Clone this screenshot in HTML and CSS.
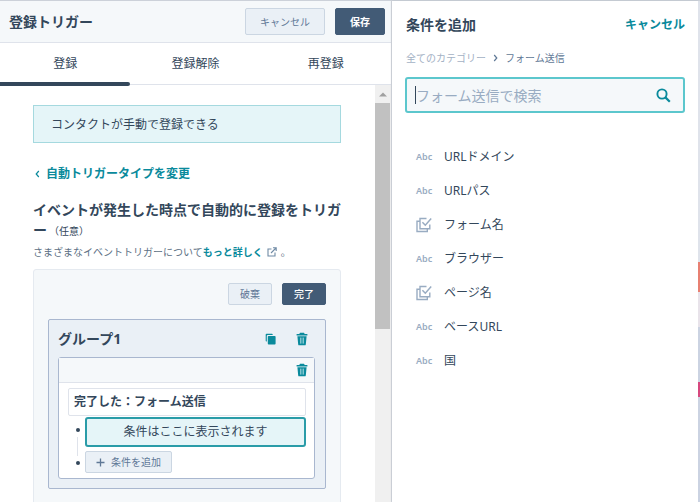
FILE: index.html
```html
<!DOCTYPE html>
<html lang="ja">
<head>
    <meta charset="UTF-8">
    <meta name="viewport" content="width=device-width, initial-scale=1.0">
    <title>登録トリガー</title>
    <link rel="stylesheet" href="styles.css">
</head>
<body>

<!-- Shared icons -->
<svg class="sprite" aria-hidden="true">
    <symbol id="icon-trash" viewBox="0 0 12 14">
        <path d="M4 0.8h4l0.7 1.2H11.4v1.6H0.6V2h2.7z" fill="currentColor"/>
        <path d="M1.4 4.2h9.2l-0.8 8.2a1 1 0 0 1-1 0.9H3.2a1 1 0 0 1-1-0.9z" fill="currentColor"/>
        <path d="M4.5 5.6v6M6 5.6v6M7.5 5.6v6" stroke="#d5eef2" stroke-width="0.6"/>
    </symbol>
    <symbol id="icon-multi" viewBox="0 0 16 16">
        <path d="M4 4.2H1v10.3h10.3v-2.4M10.5 1.5H4v10.2h9.8V7.6" fill="none" stroke="currentColor" stroke-width="1.4"/>
        <path d="M6.4 5.2l2.9 3L15.2 1.6" fill="none" stroke="currentColor" stroke-width="1.5"/>
    </symbol>
</svg>

<div class="app">
    <main class="editor">
        <header class="editor-header">
            <h1>登録トリガー</h1>
            <button class="btn btn-secondary btn-cancel">キャンセル</button>
            <button class="btn btn-primary btn-save">保存</button>
        </header>

        <nav class="tabs">
            <a href="#" class="tab active">登録</a>
            <a href="#" class="tab">登録解除</a>
            <a href="#" class="tab">再登録</a>
        </nav>

        <div class="scroll-area">
            <div class="content">
                <div class="notice">コンタクトが手動で登録できる</div>

                <a href="#" class="back-link">
                    <svg width="5" height="8" viewBox="0 0 5 8"><path d="M3.8 1L1.2 4l2.6 3" fill="none" stroke="currentColor" stroke-width="1.2"/></svg>
                    自動トリガータイプを変更
                </a>

                <h2>イベントが発生した時点で自動的に登録をトリガー<span class="optional">（任意）</span></h2>
                <p class="help">さまざまなイベントトリガーについて<a href="#">もっと詳しく<svg width="10" height="10" viewBox="0 0 10 10"><path d="M4.5 2H1v7h7V5.5M6 0.8h3.2V4M9 1L4 6" fill="none" stroke="currentColor" stroke-width="1.1"/></svg></a>。</p>

                <section class="panel">
                    <div class="panel-actions">
                        <button class="btn btn-secondary btn-small">破棄</button>
                        <button class="btn btn-primary btn-small">完了</button>
                    </div>

                    <div class="group">
                        <div class="group-header">
                            <h3>グループ1</h3>
                            <button class="icon-btn" aria-label="複製">
                                <svg width="12" height="12" viewBox="0 0 12 12"><path d="M1.8 8.6H1.5a0.8 0.8 0 0 1-0.8-0.8V1.6a0.8 0.8 0 0 1 0.8-0.8h5.4a0.8 0.8 0 0 1 0.8 0.8v0.3H3.1a1.2 1.2 0 0 0-1.3 1.3z" fill="currentColor"/><rect x="2.8" y="2.9" width="7.8" height="8.5" rx="0.9" fill="currentColor"/></svg>
                            </button>
                            <button class="icon-btn" aria-label="グループを削除">
                                <svg width="12" height="14"><use href="#icon-trash"/></svg>
                            </button>
                        </div>

                        <div class="filter">
                            <div class="filter-header">
                                <button class="icon-btn" aria-label="条件を削除">
                                    <svg width="12" height="14"><use href="#icon-trash"/></svg>
                                </button>
                            </div>
                            <div class="filter-body">
                                <div class="filter-title">完了した：フォーム送信</div>
                                <div class="branch">
                                    <div class="rail"><i class="dot"></i><i class="line"></i><i class="dot"></i></div>
                                    <div class="branch-items">
                                        <div class="placeholder">条件はここに表示されます</div>
                                        <button class="btn btn-secondary btn-small btn-plus">
                                            <svg width="9" height="9" viewBox="0 0 9 9"><path d="M4.5 0.5v8M0.5 4.5h8" stroke="currentColor" stroke-width="1.3"/></svg>
                                            条件を追加
                                        </button>
                                    </div>
                                </div>
                            </div>
                        </div>
                    </div>
                </section>
            </div>

            <div class="scrollbar">
                <svg width="8" height="5" viewBox="0 0 8 5"><path d="M0 4.5L4 0.5l4 4z" fill="#a0a0a0"/></svg>
                <div class="thumb"></div>
            </div>
        </div>
    </main>

    <aside class="picker">
        <div class="picker-header">
            <h2>条件を追加</h2>
            <a href="#">キャンセル</a>
        </div>
        <div class="breadcrumb">
            <a href="#">全てのカテゴリー</a>
            <svg width="5" height="8" viewBox="0 0 5 8"><path d="M1.2 1l2.6 3-2.6 3" fill="none" stroke="currentColor" stroke-width="1.2"/></svg>
            <span>フォーム送信</span>
        </div>
        <label class="search">
            <span class="caret"></span>
            <input type="text" placeholder="フォーム送信で検索" aria-label="フォーム送信で検索">
            <svg width="15" height="15" viewBox="0 0 15 15"><circle cx="6" cy="6" r="4.6" fill="none" stroke="currentColor" stroke-width="1.9"/><path d="M9.4 9.4l4.4 4.4" stroke="currentColor" stroke-width="2.2"/></svg>
        </label>
        <ul class="properties">
            <li><span class="type">Abc</span>URLドメイン</li>
            <li><span class="type">Abc</span>URLパス</li>
            <li><span class="type"><svg width="16" height="16"><use href="#icon-multi"/></svg></span>フォーム名</li>
            <li><span class="type">Abc</span>ブラウザー</li>
            <li><span class="type"><svg width="16" height="16"><use href="#icon-multi"/></svg></span>ページ名</li>
            <li><span class="type">Abc</span>ベースURL</li>
            <li><span class="type">Abc</span>国</li>
        </ul>
    </aside>

    <div class="backdrop"></div>
</div>

</body>
</html>
```
FILE: styles.css
```css
:root {
    --text: #33475b;
    --muted: #99acc2;
    --teal: #0a8a9c;
    --primary: #425b76;
    --secondary: #eaf0f6;
    --secondary-text: #5f7896;
    --border: #cbd6e2;
    --group-border: #a9b7cf;
    --panel-bg: #f5f8fa;
    --mint: #e5f5f8;
}

* {
    box-sizing: border-box;
    margin: 0;
    padding: 0;
}

body {
    font-family: "Noto Sans", "Noto Sans CJK JP", sans-serif;
    font-size: 12px;
    line-height: 18px;
    color: var(--text);
    background: #fff;
    overflow: hidden;
}

a {
    color: var(--teal);
    text-decoration: none;
}

svg {
    flex-shrink: 0;
}

.sprite {
    display: none;
}

.app {
    display: flex;
    height: 100vh;
    border-top: 1px solid #ccd1d9;
}

/* Editor */
.editor {
    width: 56%;
    display: flex;
    flex-direction: column;
    border-right: 1px solid #d5d8de;
}

.editor-header {
    display: flex;
    align-items: center;
    gap: 10px;
    height: 42px;
    padding: 0 6px 0 9px;
    background: var(--panel-bg);
    border-bottom: 1px solid #dfe3eb;
}

h1 {
    flex: 1;
    font-size: 14px;
}

/* Buttons */
.btn {
    display: flex;
    align-items: center;
    justify-content: center;
    gap: 6px;
    height: 27px;
    border: 1px solid var(--border);
    border-radius: 2px;
    font-family: inherit;
    font-size: 10px;
    line-height: 18px;
    cursor: pointer;
}

.btn-primary {
    background: var(--primary);
    border-color: var(--primary);
    color: #fff;
    font-weight: 500;
}

.btn-secondary {
    background: var(--secondary);
    color: var(--secondary-text);
}

.btn-cancel { padding: 0 14px; }
.btn-save { padding: 0 14px; font-weight: 700; }
.btn-small { height: 22px; padding: 0 11px; }
.btn-plus { padding: 0 10px; }

.icon-btn {
    display: flex;
    border: none;
    background: none;
    color: var(--teal);
    cursor: pointer;
}

/* Tabs */
.tabs {
    display: flex;
    height: 42px;
    border-bottom: 1px solid #dfe3eb;
}

.tab {
    position: relative;
    flex: 1;
    text-align: center;
    line-height: 42px;
    color: var(--text);
}

.tab.active::after {
    content: "";
    position: absolute;
    left: 0;
    right: 0;
    bottom: -2px;
    height: 4px;
    background: var(--text);
    border-radius: 0 2px 2px 0;
}

/* Scrolling content */
.scroll-area {
    flex: 1;
    display: flex;
    min-height: 0;
    overflow: hidden;
}

.content {
    flex: 1;
    padding: 20px 34px 0 33px;
}

.notice {
    padding: 10px 17px 8px;
    background: var(--mint);
    border: 1px solid #a5d9df;
}

.back-link {
    display: flex;
    align-items: center;
    gap: 6px;
    margin: 22px 0 17px;
    padding-left: 2px;
    font-weight: 700;
}

.content h2 {
    font-size: 14px;
    line-height: 20px;
    line-break: loose;
}

.optional {
    display: inline-block;
    margin-left: 2px;
    font-size: 10px;
    font-weight: 400;
    line-height: 18px;
}

.help {
    margin-top: 3px;
    font-size: 10px;
    color: #5c6f84;
}

.help a {
    font-weight: 700;
}

.help svg {
    margin: 0 4px;
    vertical-align: -1px;
    color: #6f8aa5;
}

.panel {
    margin-top: 8px;
    padding: 13px 14px 40px;
    background: var(--panel-bg);
    border: 1px solid #e5eaf0;
    border-radius: 3px;
}

.panel-actions {
    display: flex;
    justify-content: flex-end;
    gap: 10px;
    margin-bottom: 14px;
}

/* Filter group */
.group {
    padding: 0 10px 9px 9px;
    background: var(--secondary);
    border: 1px solid var(--group-border);
    border-radius: 2px;
}

.group-header {
    display: flex;
    align-items: center;
    gap: 19px;
    height: 37px;
    padding-right: 7px;
}

.group-header h3 {
    flex: 1;
    font-size: 14px;
}

.filter {
    background: #fff;
    border: 1px solid var(--group-border);
    border-radius: 3px;
}

.filter-header {
    display: flex;
    align-items: center;
    justify-content: flex-end;
    height: 25px;
    padding-right: 6px;
    background: var(--panel-bg);
    border-bottom: 1px solid #dfe3eb;
}

.filter-body {
    padding: 5px 8px 5px 9px;
}

.filter-title {
    padding: 4px 5px;
    border: 1px solid #dfe3eb;
    border-radius: 2px;
    font-weight: 700;
}

.branch {
    display: flex;
    gap: 5px;
    margin-top: 1px;
}

.rail {
    width: 12px;
    display: flex;
    flex-direction: column;
    align-items: flex-end;
    gap: 5px;
    padding: 11px 0 8px;
}

.dot {
    width: 4px;
    height: 4px;
    border-radius: 50%;
    background: var(--text);
}

.line {
    flex: 1;
    width: 1px;
    margin-right: 2px;
    background: #dfe3eb;
}

.branch-items {
    flex: 1;
    display: flex;
    flex-direction: column;
    align-items: flex-start;
    gap: 4px;
}

.placeholder {
    width: 100%;
    padding: 4px;
    text-align: center;
    background: var(--mint);
    border: 2px solid #2a9ca8;
    border-radius: 3px;
}

/* Scrollbar */
.scrollbar {
    width: 16px;
    display: flex;
    flex-direction: column;
    align-items: center;
    gap: 6px;
    padding: 7px 1px 0 0;
    background: #f0f0f0;
}

.thumb {
    width: 15px;
    height: 55%;
    background: #c1c1c1;
}

/* Property picker */
.picker {
    flex: 1;
    padding: 0 13px 0 14px;
    box-shadow: 0 0 2px #b4bac4;
}

.picker-header {
    display: flex;
    align-items: center;
    justify-content: space-between;
    height: 48px;
}

.picker-header h2 {
    font-size: 14px;
}

.picker-header a {
    font-weight: 700;
}

.breadcrumb {
    display: flex;
    align-items: center;
    gap: 7px;
    font-size: 10px;
    color: #5f7896;
}

.breadcrumb a {
    color: #a3b1c4;
}

.search {
    display: flex;
    align-items: center;
    height: 36px;
    margin: 10px 0 27px -1px;
    padding: 0 12px 0 8px;
    background: var(--panel-bg);
    border: 2px solid #5cc7cd;
    border-radius: 3px;
    color: var(--teal);
}

.caret {
    width: 1px;
    height: 18px;
    background: var(--text);
}

.search input {
    flex: 1;
    min-width: 0;
    border: none;
    outline: none;
    background: none;
    font-family: inherit;
    font-size: 14px;
    color: var(--text);
}

.search input::placeholder {
    color: var(--muted);
}

.properties {
    list-style: none;
}

.properties li {
    display: flex;
    align-items: center;
    height: 34px;
    padding-left: 10px;
}

.type {
    display: flex;
    width: 28px;
    font-size: 9px;
    font-weight: 600;
    color: var(--muted);
}

/* Slice of the workflow canvas behind the panels */
.backdrop {
    width: 2px;
    background: linear-gradient(
        #dfe3eb 52%,
        #e88072 52%, #e88072 58%,
        #e8e3ea 58%, #e8e3ea 65%,
        #cbd3e2 65%, #cbd3e2 76%,
        #d6487e 76%, #d6487e 79%,
        #cbd3e2 79%
    );
}
```
